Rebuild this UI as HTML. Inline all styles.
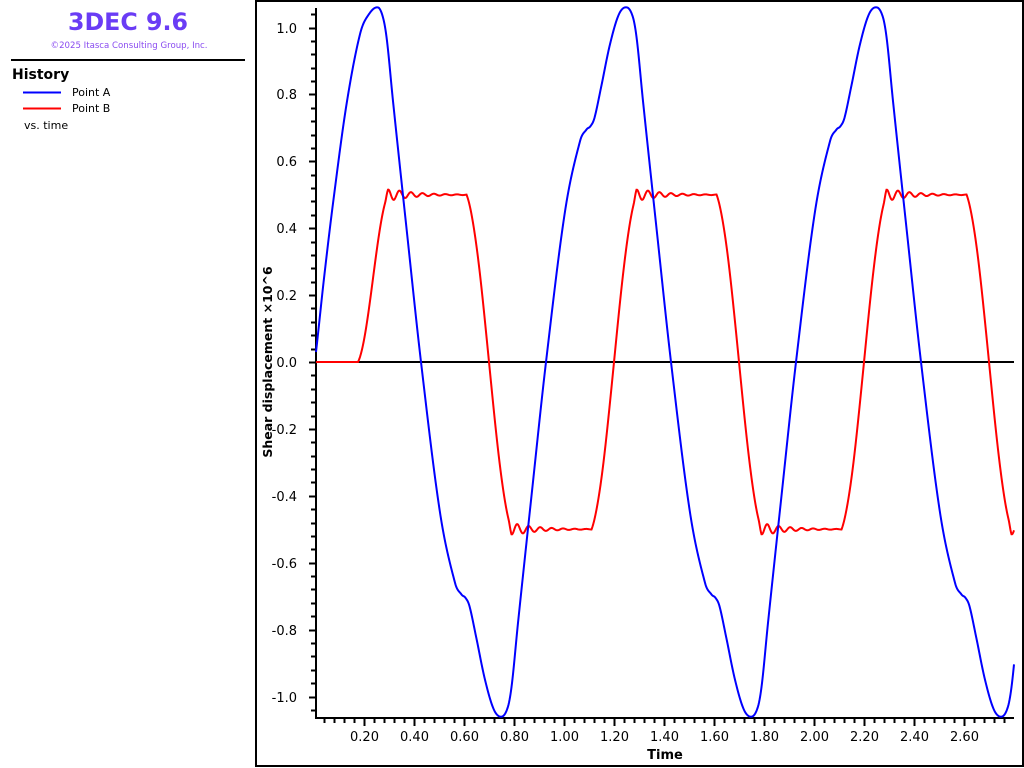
<!DOCTYPE html>
<html><head><meta charset="utf-8">
<style>
html,body{margin:0;padding:0;background:#fff;}
body{width:1024px;height:768px;overflow:hidden;position:relative;font-family:"DejaVu Sans","Liberation Sans",sans-serif;}
</style></head>
<body>
<svg id="s" width="1024" height="768" xmlns="http://www.w3.org/2000/svg" style="position:absolute;left:0;top:0">
<rect x="256" y="1" width="767" height="765" fill="none" stroke="#000" stroke-width="2"/>
<text x="128" y="30" text-anchor="middle" font-family="DejaVu Sans, sans-serif" font-weight="bold" font-size="24" fill="#6a3cf5" textLength="120" lengthAdjust="spacingAndGlyphs">3DEC 9.6</text>
<text x="129" y="48" text-anchor="middle" font-family="DejaVu Sans, sans-serif" font-size="8.6" fill="#8a4cf0">©2025 Itasca Consulting Group, Inc.</text>
<line x1="11" y1="60" x2="245" y2="60" stroke="#000" stroke-width="2"/>
<text x="12" y="79" font-family="DejaVu Sans, sans-serif" font-weight="bold" font-size="14" fill="#000">History</text>
<line x1="23" y1="92.5" x2="61" y2="92.5" stroke="#00f" stroke-width="2"/>
<text x="72" y="96" font-size="11" fill="#000">Point A</text>
<line x1="23" y1="108.5" x2="61" y2="108.5" stroke="#f00" stroke-width="2"/>
<text x="72" y="112" font-size="11" fill="#000">Point B</text>
<text x="24" y="129" font-size="11" fill="#000">vs. time</text>
<g id="ax"></g>
<path id="pb" fill="none" stroke="#f00" stroke-width="2"/>
<path id="pa" fill="none" stroke="#00f" stroke-width="2"/>
<text transform="translate(272,362) rotate(-90)" text-anchor="middle" font-weight="bold" font-size="12.5" fill="#000">Shear displacement ×10^6</text>
<text x="665" y="759" text-anchor="middle" font-weight="bold" font-size="13" fill="#000">Time</text>
</svg>
<script>
var X=function(t){return 314+250*t;},Y=function(v){return 362-334.5*v;};
var ax='';
ax+='<line x1="316" y1="8" x2="316" y2="719" stroke="#000" stroke-width="2"/>';
ax+='<line x1="315" y1="718" x2="1014" y2="718" stroke="#000" stroke-width="2"/>';
ax+='<line x1="316" y1="362" x2="1014" y2="362" stroke="#000" stroke-width="2"/>';
for(var i=-26;i<=26;i++){var v=i*0.04,y=Math.round(Y(v))+0.5;if(y<8||y>718)continue;var maj=(i%5==0);
ax+='<line x1="'+(maj?309:311)+'" y1="'+y+'" x2="316" y2="'+y+'" stroke="#000" stroke-width="2"/>';
if(maj){ax+='<text x="297" y="'+(y+4.5)+'" text-anchor="end" font-size="13" fill="#000">'+(v<-1e-9?'-':'')+Math.abs(v).toFixed(1)+'</text>';}}
for(var i=1;i<=69;i++){var t=i*0.04,x=Math.round(X(t))+0.5;var maj=(i%5==0);
ax+='<line x1="'+x+'" y1="718" x2="'+x+'" y2="'+(maj?726:723)+'" stroke="#000" stroke-width="2"/>';
if(maj)ax+='<text x="'+x+'" y="741" text-anchor="middle" font-size="13" fill="#000">'+t.toFixed(2)+'</text>';}
document.getElementById('ax').innerHTML=ax;
var desc=[[0.256,1.06],[0.276,1.03],[0.292,0.96],[0.316,0.78],[0.37,0.40],[0.428,0],[0.504,-0.45],[0.564,-0.66],[0.59,-0.695],[0.606,-0.705],[0.622,-0.73],[0.648,-0.82],[0.684,-0.95],[0.72,-1.04],[0.752,-1.06]];
var per=[];desc.forEach(function(p){per.push(p);});
desc.slice(1).forEach(function(p){per.push([p[0]+0.5,-p[1]]);});
var pts=[[0.0,-0.01],[0.008,0.03],[0.04,0.25],[0.077,0.48],[0.13,0.77],[0.184,0.98],[0.22,1.04]];
for(var k=0;k<3;k++){per.forEach(function(p,j){if(k>0&&j==0)return;pts.push([p[0]+k,p[1]]);});}
function cr(pts,t){for(var i=0;i<pts.length-1;i++){if(t>=pts[i][0]&&t<=pts[i+1][0]){var p0=pts[Math.max(0,i-1)],p1=pts[i],p2=pts[i+1],p3=pts[Math.min(pts.length-1,i+2)];
var h=p2[0]-p1[0],s=(t-p1[0])/h;var m1=(p2[1]-p0[1])/(p2[0]-p0[0])*h,m2=(p3[1]-p1[1])/(p3[0]-p1[0])*h;
var s2=s*s,s3=s2*s;return (2*s3-3*s2+1)*p1[1]+(s3-2*s2+s)*m1+(-2*s3+3*s2)*p2[1]+(s3-s2)*m2;}}return 0;}
function ramp(s){if(s<=0)return 0;if(s>=1)return 1;return 0.35*s+0.65*(1-Math.cos(Math.PI*s))/2;}
function B(t){var v=0.5*ramp((t-0.176)/0.12);var ends=[[0.296,1]];
var tr=[[0.70,-1],[1.20,1],[1.70,-1],[2.20,1],[2.70,-1]];
tr.forEach(function(c){v+=c[1]*ramp((t-(c[0]-0.09))/0.18);ends.push([c[0]+0.09,c[1]]);});
ends.forEach(function(e){var d=t-e[0]+0.012;if(d>0)v+=e[1]*0.022*(1-Math.exp(-d/0.008))*Math.exp(-d/0.1)*Math.cos(2*Math.PI*(d-0.012)/0.046);});
return v;}
var da='',db='';
for(var x=316;x<=1014;x+=0.5){var t=(x-314)/250;var a=cr(pts,t),b=B(t);
da+=(x==316?'M':'L')+x+','+Y(a).toFixed(2);db+=(x==316?'M':'L')+x+','+Y(b).toFixed(2);}
document.getElementById('pa').setAttribute('d',da);document.getElementById('pb').setAttribute('d',db);
</script>
</body></html>
